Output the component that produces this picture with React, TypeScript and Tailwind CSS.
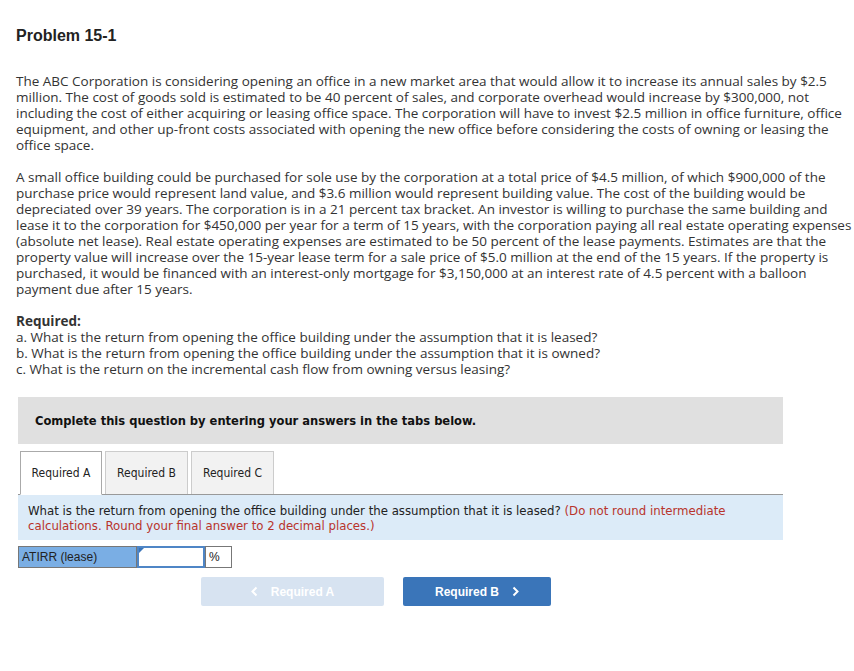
import React from "react";

const para1 = [
  "The ABC Corporation is considering opening an office in a new market area that would allow it to increase its annual sales by $2.5",
  "million. The cost of goods sold is estimated to be 40 percent of sales, and corporate overhead would increase by $300,000, not",
  "including the cost of either acquiring or leasing office space. The corporation will have to invest $2.5 million in office furniture, office",
  "equipment, and other up-front costs associated with opening the new office before considering the costs of owning or leasing the",
  "office space.",
];

const para2 = [
  "A small office building could be purchased for sole use by the corporation at a total price of $4.5 million, of which $900,000 of the",
  "purchase price would represent land value, and $3.6 million would represent building value. The cost of the building would be",
  "depreciated over 39 years. The corporation is in a 21 percent tax bracket. An investor is willing to purchase the same building and",
  "lease it to the corporation for $450,000 per year for a term of 15 years, with the corporation paying all real estate operating expenses",
  "(absolute net lease). Real estate operating expenses are estimated to be 50 percent of the lease payments. Estimates are that the",
  "property value will increase over the 15-year lease term for a sale price of $5.0 million at the end of the 15 years. If the property is",
  "purchased, it would be financed with an interest-only mortgage for $3,150,000 at an interest rate of 4.5 percent with a balloon",
  "payment due after 15 years.",
];

const required = [
  "a. What is the return from opening the office building under the assumption that it is leased?",
  "b. What is the return from opening the office building under the assumption that it is owned?",
  "c. What is the return on the incremental cash flow from owning versus leasing?",
];

function Lines({ lines }: { lines: string[] }) {
  return (
    <div>
      {lines.map((l, i) => (
        <div key={i} className="whitespace-nowrap h-4">{l}</div>
      ))}
    </div>
  );
}

export default function App() {
  return (
    <div className="w-[854px] h-[671px] bg-white overflow-hidden">
      {/* Problem text */}
      <div className="pl-4 pt-[26px] text-[#333] font-['Open_Sans',sans-serif] text-[13.5px] leading-4">
        <h1 className="font-['Liberation_Sans',Arial,sans-serif] font-bold text-[16px] leading-5 text-[#222]">Problem 15-1</h1>
        <div className="mt-[27px]">
          <Lines lines={para1} />
        </div>
        <div className="mt-4">
          <Lines lines={para2} />
        </div>
        <div className="mt-4">
          <div className="font-bold h-4">Required:</div>
          <Lines lines={required} />
        </div>
      </div>

      {/* Question panel */}
      <div className="ml-[18px] w-[765px] mt-[20px]">
        <div className="bg-[#e0e0e0] h-[47px] flex items-center pl-[17px] font-['DejaVu_Sans_Condensed','DejaVu_Sans',sans-serif] font-bold text-[12.8px] text-[#111]">
          Complete this question by entering your answers in the tabs below.
        </div>

        <div className="mt-[7px] flex items-end gap-[3px] pl-[2px] border-b border-[#999] h-[44px] font-['DejaVu_Sans_Condensed','DejaVu_Sans',sans-serif] text-[12px] text-[#222]">
          <div className="w-[82px] h-[44px] -mb-px bg-white border border-[#aaa] border-b-white flex items-center justify-center">Required A</div>
          <div className="w-[83px] h-[43px] bg-[#f2f2f2] border border-b-0 border-[#ccc] flex items-center justify-center">Required B</div>
          <div className="w-[83px] h-[43px] bg-[#f2f2f2] border border-b-0 border-[#ccc] flex items-center justify-center">Required C</div>
        </div>

        <div className="bg-[#dcebf8] h-[45px] px-[10px] pt-[9px] font-['DejaVu_Sans',Verdana,sans-serif] text-[11.75px] leading-[15px] text-[#222]">
          What is the return from opening the office building under the assumption that it is leased?{" "}
          <span className="text-[#b8342c]">(Do not round intermediate calculations. Round your final answer to 2 decimal places.)</span>
        </div>

        <div className="mt-[6px] flex h-[22px] font-['Liberation_Sans',Arial,sans-serif] text-[12px] text-[#222]">
          <div className="w-[119px] bg-[#7aaee4] border border-[#777] pl-[3px] flex items-center">ATIRR (lease)</div>
          <div className="relative w-[68px] bg-white border-2 border-[#4f86c6]">
            <div className="absolute left-0 top-0 w-0 h-0 border-t-[5px] border-t-[#3a75b9] border-r-[5px] border-r-transparent" />
          </div>
          <div className="w-[27px] border border-[#777] pl-[3px] flex items-center">%</div>
        </div>

        <div className="mt-[9px] flex gap-[19px] pl-[183px] font-['Liberation_Sans',Arial,sans-serif] font-bold text-[12px] text-white">
          <div className="w-[183px] h-[29px] bg-[#d7e3f1] rounded-[2px] flex items-center justify-center gap-[13px]">
            <svg width="7" height="11" viewBox="0 0 7 11"><path d="M5.5 1.5 L1.5 5.5 L5.5 9.5" stroke="white" strokeWidth="2" fill="none" /></svg>
            <span>Required A</span>
          </div>
          <div className="w-[148px] h-[29px] bg-[#3a75b9] rounded-[2px] flex items-center justify-center gap-[13px]">
            <span>Required B</span>
            <svg width="7" height="11" viewBox="0 0 7 11"><path d="M1.5 1.5 L5.5 5.5 L1.5 9.5" stroke="white" strokeWidth="2" fill="none" /></svg>
          </div>
        </div>
      </div>
    </div>
  );
}
